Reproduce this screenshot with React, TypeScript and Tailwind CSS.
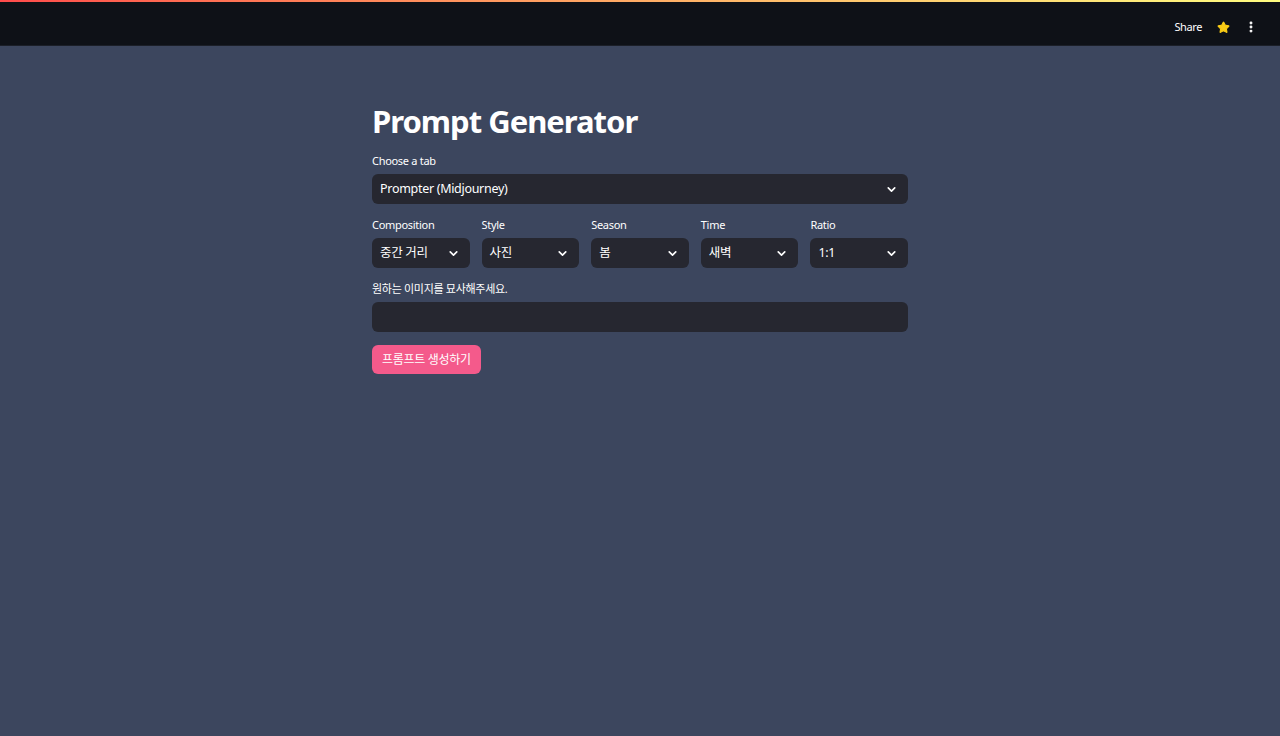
import { ChevronDown, Star, EllipsisVertical } from 'lucide-react';

const font = { fontFamily: '"Noto Sans", "Noto Sans CJK KR", sans-serif' };

interface SelectBoxProps {
  label: string;
  value: string;
}

function SelectBox({ label, value }: SelectBoxProps) {
  return (
    <div className="flex flex-col">
      <label className="text-[11px] leading-[14px] text-white mb-[6px] tracking-[-0.3px]">{label}</label>
      <div className="h-[30px] rounded-md bg-[#262730] flex items-center justify-between pl-[8px] pr-[10px]">
        <span className="text-[12.5px] text-white tracking-[-0.3px]">{value}</span>
        <ChevronDown className="w-[13px] h-[13px] text-white" strokeWidth={3} />
      </div>
    </div>
  );
}

export default function App() {
  const filters = [
    { label: 'Composition', value: '중간 거리' },
    { label: 'Style', value: '사진' },
    { label: 'Season', value: '봄' },
    { label: 'Time', value: '새벽' },
    { label: 'Ratio', value: '1:1' },
  ];

  return (
    <div className="min-h-[736px] bg-[#3c465e] flex flex-col" style={font}>
      <div className="h-[2px] bg-gradient-to-r from-[#ff4b4b] to-[#fffd80]" />
      <header className="h-[44px] bg-[#0e1117] border-b border-[#1b1f28] flex items-center justify-end pr-[22px] pt-[7px]">
        <span className="text-[11px] text-white tracking-[-0.4px]">Share</span>
        <Star className="w-[13px] h-[13px] ml-[15px] text-[#facc15] fill-[#facc15]" />
        <EllipsisVertical className="w-[14px] h-[14px] ml-[14px] text-white" strokeWidth={3} />
      </header>
      <main className="w-[536px] mx-auto pt-[55px]">
        <h1 className="text-[31px] font-bold text-white leading-[40px] tracking-[-1px] mb-[13px]">Prompt Generator</h1>
        <SelectBox label="Choose a tab" value="Prompter (Midjourney)" />
        <div className="grid grid-cols-5 gap-x-[12px] mt-[14px]">
          {filters.map((f) => (
            <SelectBox key={f.label} label={f.label} value={f.value} />
          ))}
        </div>
        <div className="mt-[14px] flex flex-col">
          <label className="text-[11px] leading-[14px] text-white mb-[6px] tracking-[-0.3px]">원하는 이미지를 묘사해주세요.</label>
          <div className="h-[30px] rounded-md bg-[#262730]" />
        </div>
        <button className="mt-[13px] h-[29px] px-[10px] rounded-md bg-[#f45a8b] text-white text-[12px] tracking-[-0.3px]">
          프롬프트 생성하기
        </button>
      </main>
    </div>
  );
}
